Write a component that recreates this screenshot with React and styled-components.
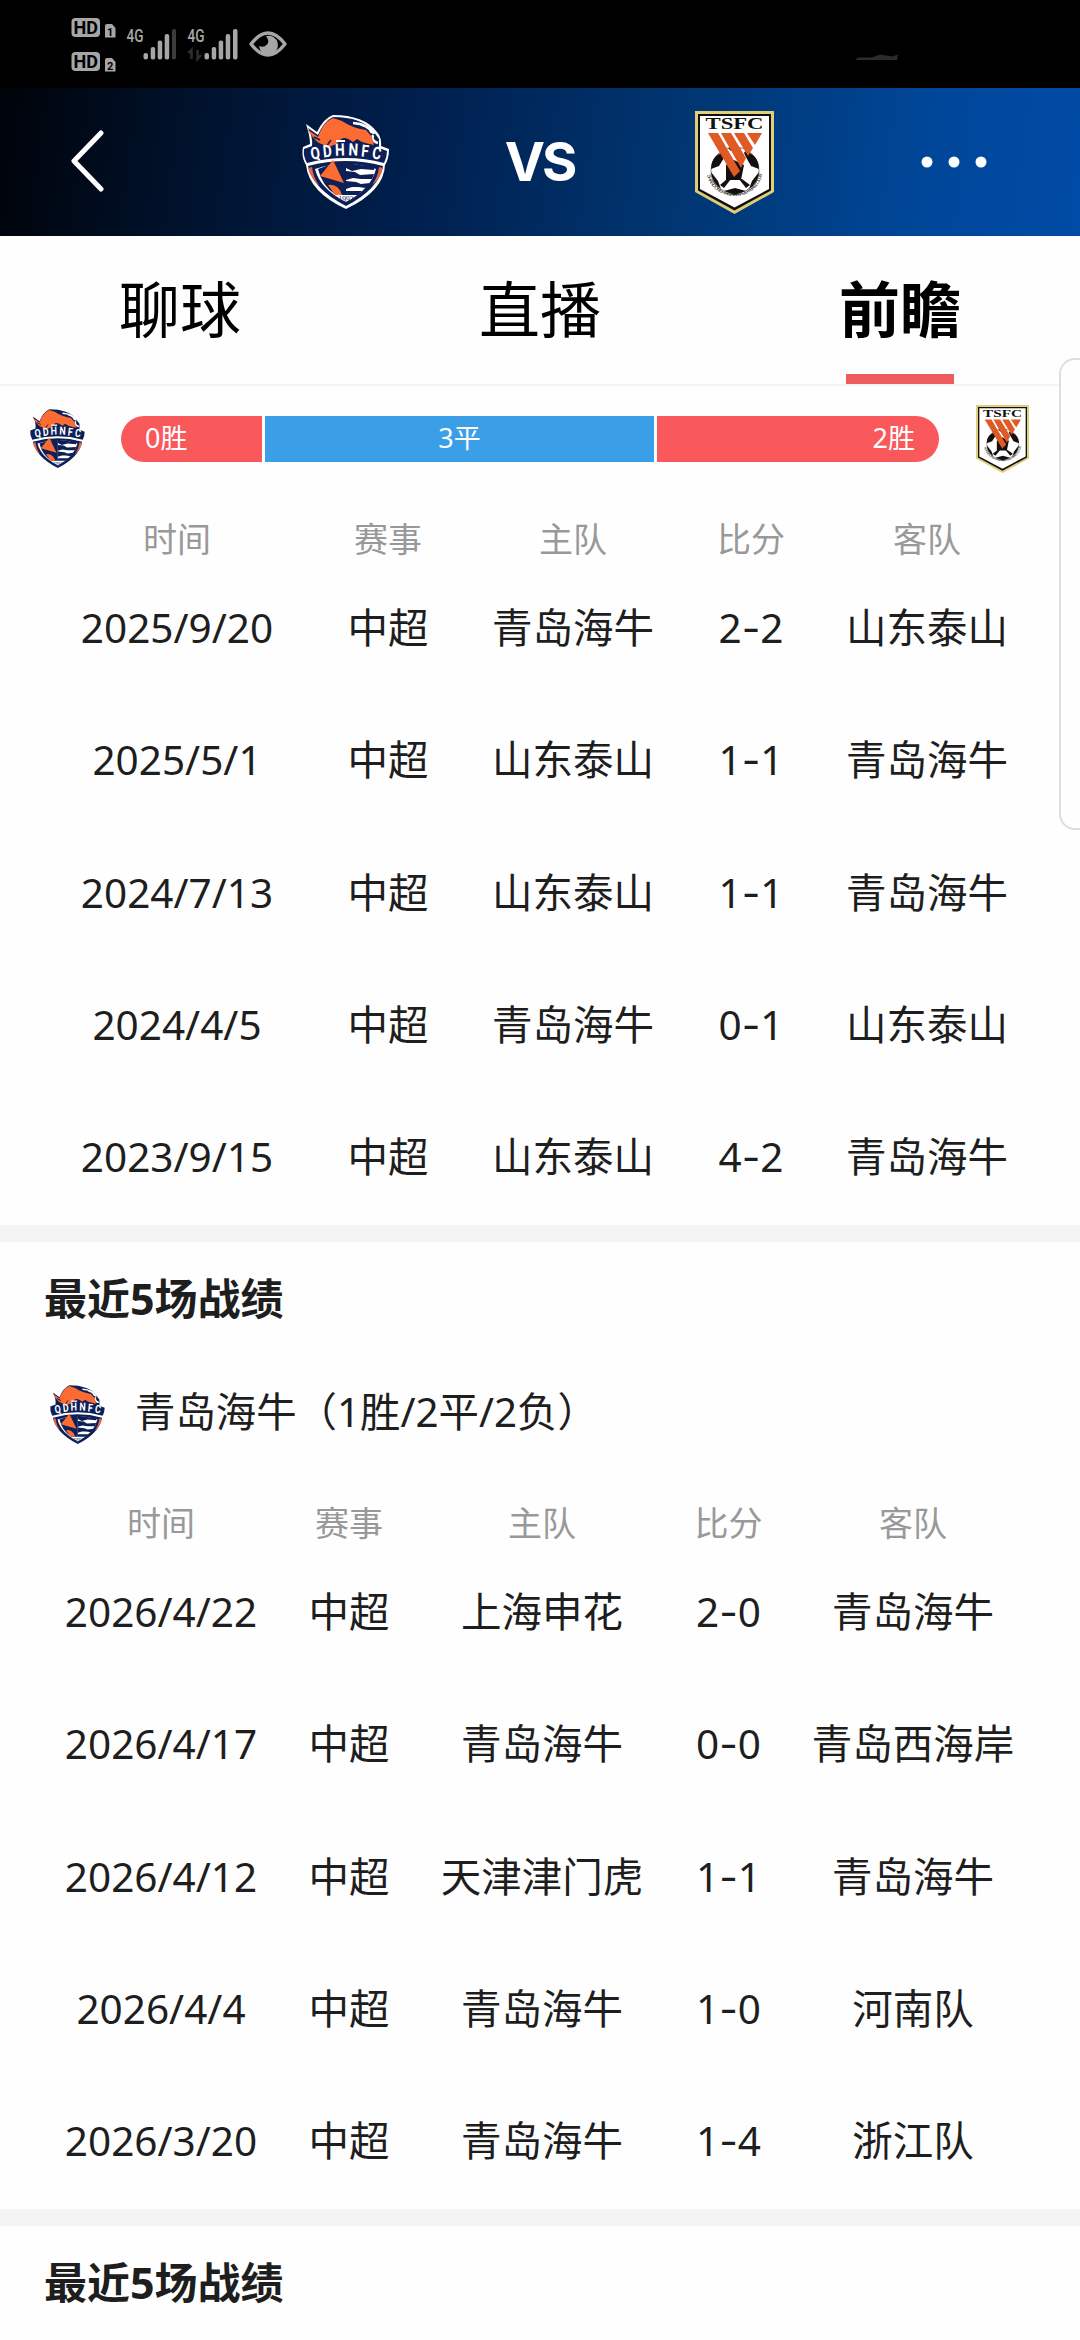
import React from 'react'
import styled, { createGlobalStyle } from 'styled-components'

const GlobalStyle = createGlobalStyle`
  * {
    box-sizing: border-box;
  }

  body {
    margin: 0;
    background: #fefefe;
    font-family: "Noto Sans", "Noto Sans CJK SC", sans-serif;
  }
`;

const Screen = styled.div`
  width: 1080px;
  height: 2340px;
  overflow: hidden;
  position: relative;
  color: #1e1e1e;
`;

const StatusBar = styled.div`
  height: 88px;
  background: #000;
`;

const Header = styled.div`
  height: 148px;
  padding: 0 93px 0 71px;
  display: grid;
  grid-template-columns: 138px 273px 115px 274px 116px;
  align-items: center;
  background: linear-gradient(98deg, #000309 0%, #001534 22%, #002050 40%, #003570 62%, #00479a 86%, #004ba6 100%);
`;

const HeaderItem = styled.div`
  display: flex;
  justify-content: ${(props) => props.$align || 'center'};
  padding-bottom: ${(props) => props.$lift || 0}px;
`;

const Versus = styled.div`
  color: #fff;
  font-family: Inter, "Noto Sans", sans-serif;
  font-size: 54px;
  font-weight: 700;
  line-height: 60px;
  letter-spacing: -3px;
`;

const Tabs = styled.div`
  display: flex;
  height: 150px;
  border-bottom: 2px solid #f3f3f3;
`;

const Tab = styled.div`
  flex: 1;
  display: flex;
  flex-direction: column;
  align-items: center;
  justify-content: space-between;
  padding-top: 30px;
  color: #000;
  font-size: 61px;
  line-height: 88px;
  font-weight: ${(props) => (props.$active ? 700 : 400)};
`;

const TabLine = styled.div`
  width: 108px;
  height: 10px;
  background: #ee5d5d;
`;

const Balance = styled.div`
  display: flex;
  align-items: center;
  height: 106px;
  padding: 0 51px 0 29px;
`;

const BalanceBar = styled.div`
  flex: 1;
  display: grid;
  grid-template-columns: 141fr 389fr 282fr;
  gap: 3px;
  height: 46px;
  margin: 0 37px 0 35px;
  border-radius: 23px;
  overflow: hidden;
`;

const BalancePart = styled.div`
  padding: 0 24px;
  background: ${(props) => (props.$draw ? '#3b9fe8' : '#fa595b')};
  color: #fff;
  font-size: 27px;
  line-height: 44px;
  text-align: ${(props) => props.$align};
`;

const Table = styled.div`
  display: grid;
  grid-template-columns: ${(props) => props.$columns};
  padding-left: ${(props) => props.$left}px;
  grid-template-rows: 92px;
  grid-auto-rows: 132.3px;
  height: 733px;
  text-align: center;
  white-space: nowrap;
`;

const HeadCell = styled.div`
  color: #999;
  font-size: 34px;
  line-height: 94px;
`;

const Cell = styled.div`
  font-size: 40.5px;
  line-height: 87px;
`;

const Dash = styled.span`
  font-family: Inter, sans-serif;
`;

const Separator = styled.div`
  height: 17px;
  background: #f4f4f4;
`;

const Title = styled.div`
  padding-left: 44px;
  font-size: 43px;
  font-weight: 700;
  line-height: 114px;
`;

const TeamRow = styled.div`
  display: flex;
  align-items: center;
  gap: 29px;
  height: 120px;
  padding: 0 0 3px 49px;
`;

const TeamName = styled.div`
  padding-bottom: 6px;
  font-size: 40.4px;
  line-height: 60px;
`;

// the edge of a drawer that peeks in over the page
const DrawerEdge = styled.div`
  position: absolute;
  top: 358px;
  right: -20px;
  width: 41px;
  height: 472px;
  background: #fefefe;
  border: 2px solid #dedede;
  border-radius: 16px;
`;

function StatusIcons() {
  return (
    <svg width="1080" height="88" viewBox="0 0 1080 88" fontFamily="Roboto, sans-serif">
      <g fill="#a6a6a6">
        <rect x="71.500" y="18" width="28.500" height="19" rx="4" />
        <rect x="71.500" y="52" width="28.500" height="19" rx="4" />
        <path d="M107 24h5l3.500 4v9.500h-10.500v-11.500q0-2 2-2zM107 58h5l3.500 4v9.500h-10.500v-11.500q0-2 2-2z" />
        <rect x="143.500" y="53" width="4.500" height="6.500" rx="2" />
        <rect x="150.700" y="47" width="4.500" height="12.500" rx="2" />
        <rect x="157.700" y="40.500" width="4.500" height="19" rx="2" />
        <rect x="164.700" y="34" width="4.500" height="25.500" rx="2" />
        <rect x="172" y="29" width="4" height="30.500" rx="2" fill="#3c3c3c" />
        <rect x="204.500" y="53" width="4.500" height="6.500" rx="2" />
        <rect x="211.700" y="47" width="4.500" height="12.500" rx="2" />
        <rect x="218.700" y="40.500" width="4.500" height="19" rx="2" />
        <rect x="225.700" y="34" width="4.500" height="25.500" rx="2" />
        <rect x="233" y="29" width="4.500" height="30.500" rx="2" />
      </g>
      <g fill="#000" fontWeight="700" fontSize="18">
        <text x="73.500" y="34" textLength="24.500" lengthAdjust="spacingAndGlyphs">HD</text>
        <text x="73.500" y="68" textLength="24.500" lengthAdjust="spacingAndGlyphs">HD</text>
        <text x="107" y="35.500" fontSize="11">1</text>
        <text x="107" y="69.500" fontSize="11">2</text>
      </g>
      <g fill="#a6a6a6" fontWeight="500" fontSize="18.500">
        <text x="126.500" y="42" textLength="17" lengthAdjust="spacingAndGlyphs">4G</text>
        <text x="187.500" y="42" textLength="17" lengthAdjust="spacingAndGlyphs">4G</text>
      </g>
      <path d="M188.500 53l3-3v9M197.500 50v9l3.500-4" fill="none" stroke="#2e2e2e" strokeWidth="2.500" />
      <path d="M251 44q17-22 34 0q-17 22-34 0z" fill="none" stroke="#a6a6a6" strokeWidth="3.500" strokeLinejoin="round" />
      <path d="M266 36a9.500 9.500 0 1 1-7 10q5 2 8-1.500t-1-8.500z" fill="#a6a6a6" />
      <path d="M855 60l3-2.500h14l8-3 6 1 6 1 6-2-1 5.500z" fill="#2b2b2b" />
    </svg>
  )
}

function HainiuCrest({ width, height }) {
  return (
    <svg width={width} height={height} viewBox="0 0 87 94" preserveAspectRatio="none">
      <path d="M4 9l11 8Q22 3 31 0Q62 0 75 17Q80 23 79 31L87 34Q87 44 83 50Q82 76 44 94Q7 77 4 50Q-1 42 1 32L8 29Q8 21 4 9z" fill="#fff" />
      <path d="M6 13l10 7Q22 6 31 2Q60 2 72 17L77 24L77 33L85 36Q85 42 82 48Q44 38 5 48Q1 41 2 34L10 31Q11 22 6 13z" fill="#0d1f57" />
      <path d="M6 51Q44 41 81 51Q77 74 44 91Q11 74 6 51z" fill="#0d1f57" />
      <path d="M13 54Q44 44 74 54Q69 74 44 87Q18 74 13 54z" fill="#fff" />
      <path d="M16 54Q30 48 44 48V80H34Q20 71 16 54z" fill="#0d1f57" />
      <path d="M31 45L42 68L18 61z" fill="#fc6b32" />
      <path d="M26 70Q36 68 40 80H33z" fill="#fc6b32" />
      <path d="M6 53l4-1q1 10 7 18q-8-6-11-17zM81 53l-4-1q-1 10-7 18q8-6 11-17z" fill="#e4674a" />
      <g fill="#0d1f57">
        <path d="M44 48l28 4v3l-13-1-9 2-6-3z" />
        <path d="M44 56l9 1 5 3 14-1-2 5-11 0-8-1-7 2z" />
        <path d="M44 66l10 1 5 2 9-1-4 5-8-1-6 0-6 2z" />
        <path d="M44 76l16 0-4 4-12 0z" />
      </g>
      <path d="M51 8q15 1 19 10M60 10q10 3 12 9M71 20q-2 6 5 8" fill="none" stroke="#fff" strokeWidth="2.500" />
      <path d="M5 14l11 8Q21 7 31 3L40 6Q50 13 64 15L70 22L72 30Q67 29 60 27L55 24L51 27Q42 20 38 25L34 29L25 33L20 29Q15 29 5 14z" fill="#fc6b32" />
      <path d="M12 22l6 3M24 32l5-7" stroke="#0d1f57" strokeWidth="1.500" />
      <g fill="#fff" fontFamily="Roboto, sans-serif" fontWeight="700" fontSize="17" textAnchor="middle">
        <text transform="translate(14 44) rotate(-9) scale(.8 1)">Q</text>
        <text transform="translate(26 42) rotate(-6) scale(.8 1)">D</text>
        <text transform="translate(38 40.500) rotate(-2) scale(.8 1)">H</text>
        <text transform="translate(51 40.500) rotate(3) scale(.8 1)">N</text>
        <text transform="translate(62.500 42) rotate(6) scale(.8 1)">F</text>
        <text transform="translate(74 44) rotate(9) scale(.8 1)">C</text>
      </g>
      <path d="M34 26h9" stroke="#fff" strokeWidth="2" />
      <text x="44" y="86.500" fill="#0d1f57" fontFamily="Liberation Serif, serif" fontSize="7.500" textAnchor="middle">1993</text>
    </svg>
  )
}

function TaishanCrest({ width, height, id }) {
  return (
    <svg width={width} height={height} viewBox="0 0 79 103" preserveAspectRatio="none">
      <path d="M0 0H79V81L39.500 103L0 81z" fill="#e0cf78" />
      <path d="M3 3H76V79.500L39.500 99.500L3 79.500z" fill="#14100f" />
      <path d="M5 5H74V78L39.500 96.500L5 78z" fill="#fff" />
      <text x="39.500" y="18" fill="#111" fontFamily="Liberation Serif, serif" fontWeight="700" fontSize="16" textAnchor="middle" textLength="58" lengthAdjust="spacingAndGlyphs">TSFC</text>
      <circle cx="40" cy="60" r="24" fill="#fff" stroke="#555" strokeWidth=".7" />
      <g fill="#14100f">
        <path d="M31 54L39 49L49 54L46 69H31z" />
        <path d="M21 45l9-6 2 3-3 5-5 8-8 3q0-8 5-13z" />
        <path d="M59 45l-8-6-2 3 3 6 4 7 8 3q0-8-5-13z" />
        <path d="M16 61l7 9 3 8q-9-6-10-17z" />
        <path d="M64 61l-7 9-3 8q9-6 10-17z" />
        <path d="M32 68l4 0-7 9-4-3zM47 68l-3 0 7 9 4-3zM29 80l11-3 11 3-11 4z" />
        <path d="M33 37h13l-3 3h-7z" />
      </g>
      <path d="M13 22H23L45 60L39 66z" fill="#e05a26" />
      <path d="M26 22H36L51 47L46 57z" fill="#e05a26" />
      <path d="M39 22H49L58 37L53 45z" fill="#e05a26" />
      <path d="M52 22H67L60 34z" fill="#e05a26" />
      <path id={id} d="M12 64A28 26 0 0 0 67 64" fill="none" />
      <text fill="#222" fontFamily="Liberation Sans, sans-serif" fontSize="5">
        <textPath href={`#${id}`} textLength="76">SHANDONG TAISHAN FOOTBALL CLUB</textPath>
      </text>
    </svg>
  )
}

const headings = ['时间', '赛事', '主队', '比分', '客队'];

const meetings = [
  ['2025/9/20', '中超', '青岛海牛', '2-2', '山东泰山'],
  ['2025/5/1', '中超', '山东泰山', '1-1', '青岛海牛'],
  ['2024/7/13', '中超', '山东泰山', '1-1', '青岛海牛'],
  ['2024/4/5', '中超', '青岛海牛', '0-1', '山东泰山'],
  ['2023/9/15', '中超', '山东泰山', '4-2', '青岛海牛'],
];

const recent = [
  ['2026/4/22', '中超', '上海申花', '2-0', '青岛海牛'],
  ['2026/4/17', '中超', '青岛海牛', '0-0', '青岛西海岸'],
  ['2026/4/12', '中超', '天津津门虎', '1-1', '青岛海牛'],
  ['2026/4/4', '中超', '青岛海牛', '1-0', '河南队'],
  ['2026/3/20', '中超', '青岛海牛', '1-4', '浙江队'],
];

function Matches({ rows, columns, left }) {
  return (
    <Table $columns={columns} $left={left}>
      {headings.map((text) => <HeadCell key={text}>{text}</HeadCell>)}
      {rows.map(([date, league, home, score, away]) => {
        const [homeGoals, awayGoals] = score.split('-');
        return (
          <React.Fragment key={date}>
            <Cell>{date}</Cell>
            <Cell>{league}</Cell>
            <Cell>{home}</Cell>
            <Cell>{homeGoals}<Dash>-</Dash>{awayGoals}</Cell>
            <Cell>{away}</Cell>
          </React.Fragment>
        )
      })}
    </Table>
  )
}

export default function App() {
  return (
    <Screen>
      <GlobalStyle />
      <StatusBar>
        <StatusIcons />
      </StatusBar>
      <Header>
        <HeaderItem $align="flex-start" $lift={3}>
          <svg width="34" height="64" viewBox="0 0 34 64" fill="none" stroke="#fff" strokeWidth="5" strokeLinecap="round" strokeLinejoin="round">
            <path d="M30 4L3 32L30 60" />
          </svg>
        </HeaderItem>
        <HeaderItem><HainiuCrest width={87} height={94} /></HeaderItem>
        <HeaderItem><Versus>VS</Versus></HeaderItem>
        <HeaderItem><TaishanCrest width={79} height={103} id="club-large" /></HeaderItem>
        <HeaderItem $align="flex-end">
          <svg width="66" height="12" viewBox="0 0 66 12" fill="#fff">
            <circle cx="6" cy="6" r="5.500" />
            <circle cx="33" cy="6" r="5.500" />
            <circle cx="60" cy="6" r="5.500" />
          </svg>
        </HeaderItem>
      </Header>
      <Tabs>
        <Tab>聊球</Tab>
        <Tab>直播</Tab>
        <Tab $active>前瞻<TabLine /></Tab>
      </Tabs>
      <Balance>
        <HainiuCrest width={57} height={62} />
        <BalanceBar>
          <BalancePart $align="left">0胜</BalancePart>
          <BalancePart $align="center" $draw>3平</BalancePart>
          <BalancePart $align="right">2胜</BalancePart>
        </BalanceBar>
        <TaishanCrest width={53} height={68} id="club-small" />
      </Balance>
      <Matches rows={meetings} columns="242px 180px 190px 166px 186px" left={56} />
      <Separator />
      <Title>最近5场战绩</Title>
      <TeamRow>
        <HainiuCrest width={57} height={62} />
        <TeamName>青岛海牛（1胜/2平/2负）</TeamName>
      </TeamRow>
      <Matches rows={recent} columns="244px 132px 254px 119px 250px" left={39} />
      <Separator />
      <Title>最近5场战绩</Title>
      <DrawerEdge />
    </Screen>
  )
}
